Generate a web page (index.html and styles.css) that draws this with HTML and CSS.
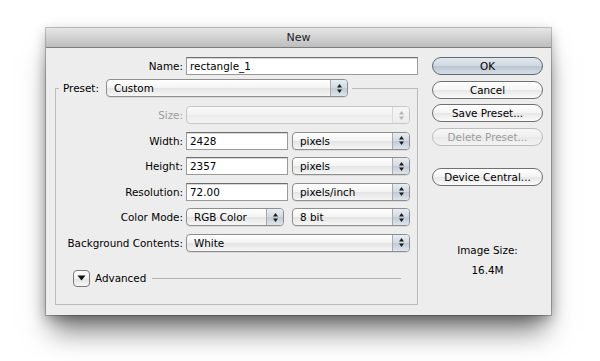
FILE: index.html
```html
<!DOCTYPE html>
<html lang="en">
  <head>
    <meta charset="UTF-8" />
    <title>New</title>
    <link rel="stylesheet" href="styles.css">
  </head>
  <body>
    <div class="dialog">
      <div class="titlebar">New</div>
      <div class="content">
        <!-- Left: form -->
        <div class="main">
          <div class="name-row">
            <span class="lbl">Name:</span>
            <div class="field">rectangle_1</div>
          </div>

          <fieldset class="group">
            <legend class="legend">
              <span class="lbl">Preset:</span>
              <div class="popup preset">
                <span class="popup-text">Custom</span>
                <span class="arrows"><svg width="7" height="11" viewBox="0 0 7 11"><path d="M3.5 1 L6 4.5 H1 Z M3.5 10 L6 6.5 H1 Z" /></svg></span>
              </div>
            </legend>

            <div class="form-grid">
              <span class="lbl disabled">Size:</span>
              <div class="popup disabled full">
                <span class="popup-text"></span>
                <span class="arrows"><svg width="7" height="11" viewBox="0 0 7 11"><path d="M3.5 1 L6 4.5 H1 Z M3.5 10 L6 6.5 H1 Z" /></svg></span>
              </div>

              <span class="lbl">Width:</span>
              <div class="pair">
                <div class="field small">2428</div>
                <div class="popup unit">
                  <span class="popup-text">pixels</span>
                  <span class="arrows"><svg width="7" height="11" viewBox="0 0 7 11"><path d="M3.5 1 L6 4.5 H1 Z M3.5 10 L6 6.5 H1 Z" /></svg></span>
                </div>
              </div>

              <span class="lbl">Height:</span>
              <div class="pair">
                <div class="field small">2357</div>
                <div class="popup unit">
                  <span class="popup-text">pixels</span>
                  <span class="arrows"><svg width="7" height="11" viewBox="0 0 7 11"><path d="M3.5 1 L6 4.5 H1 Z M3.5 10 L6 6.5 H1 Z" /></svg></span>
                </div>
              </div>

              <span class="lbl">Resolution:</span>
              <div class="pair">
                <div class="field small">72.00</div>
                <div class="popup unit">
                  <span class="popup-text">pixels/inch</span>
                  <span class="arrows"><svg width="7" height="11" viewBox="0 0 7 11"><path d="M3.5 1 L6 4.5 H1 Z M3.5 10 L6 6.5 H1 Z" /></svg></span>
                </div>
              </div>

              <span class="lbl">Color Mode:</span>
              <div class="pair mode">
                <div class="popup color">
                  <span class="popup-text">RGB Color</span>
                  <span class="arrows"><svg width="7" height="11" viewBox="0 0 7 11"><path d="M3.5 1 L6 4.5 H1 Z M3.5 10 L6 6.5 H1 Z" /></svg></span>
                </div>
                <div class="popup unit">
                  <span class="popup-text">8 bit</span>
                  <span class="arrows"><svg width="7" height="11" viewBox="0 0 7 11"><path d="M3.5 1 L6 4.5 H1 Z M3.5 10 L6 6.5 H1 Z" /></svg></span>
                </div>
              </div>

              <span class="lbl">Background Contents:</span>
              <div class="popup full">
                <span class="popup-text">White</span>
                <span class="arrows"><svg width="7" height="11" viewBox="0 0 7 11"><path d="M3.5 1 L6 4.5 H1 Z M3.5 10 L6 6.5 H1 Z" /></svg></span>
              </div>
            </div>

            <div class="advanced">
              <span class="disclosure"><svg width="9" height="6" viewBox="0 0 9 6"><path d="M0.5 0.5 H8.5 L4.5 5.5 Z" /></svg></span>
              <span class="adv-text">Advanced</span>
              <span class="adv-line"></span>
            </div>
          </fieldset>
        </div>

        <!-- Right: buttons -->
        <div class="side">
          <button class="btn default">OK</button>
          <button class="btn">Cancel</button>
          <button class="btn">Save Preset...</button>
          <button class="btn disabled">Delete Preset...</button>
          <button class="btn device">Device Central...</button>
          <div class="size-info">
            <div>Image Size:</div>
            <div class="size-value">16.4M</div>
          </div>
        </div>
      </div>
    </div>
  </body>
</html>
```

FILE: styles.css
```css
* {
  margin: 0;
  padding: 0;
  box-sizing: border-box;
}

body {
  background: #ffffff;
  font-family: "DejaVu Sans", "Lucida Grande", sans-serif;
  font-size: 10.4px;
  color: #000;
  padding: 28px 0 0 46px;
  min-height: 100vh;
}

.dialog {
  width: 505px;
  height: 287px;
  background: #ededed;
  box-shadow: 0 0 0 1px rgba(0, 0, 0, 0.22), 0 4px 12px rgba(0, 0, 0, 0.3),
    0 22px 26px -6px rgba(0, 0, 0, 0.5);
}

.titlebar {
  height: 20px;
  line-height: 19px;
  text-align: center;
  font-size: 11px;
  color: #222;
  background: linear-gradient(#e6e6e6, #bdbdbd);
  border-bottom: 1px solid #7d7d7d;
}

.content {
  display: flex;
  padding-top: 9px;
}

.main {
  padding-left: 9px;
  width: 372px;
}

.lbl {
  text-align: right;
  white-space: nowrap;
  line-height: 18px;
}

.lbl.disabled {
  color: #9b9b9b;
}

.name-row {
  display: grid;
  grid-template-columns: 128px 232px;
  column-gap: 3px;
  height: 18px;
}

.field {
  height: 18px;
  line-height: 16px;
  padding-left: 3px;
  background: #fff;
  border: 1px solid #9a9a9a;
  border-top-color: #6f6f6f;
  box-shadow: inset 0 1px 0 #d8d8d8;
}

.field.small {
  width: 102px;
}

/* Group box */
.group {
  width: 363px;
  margin-top: 4px;
  border: 1px solid #bcbcbc;
  padding: 9px 0 17px 0;
}

.legend {
  display: flex;
  margin-left: 3px;
  padding: 0 4px;
}

.legend .lbl {
  width: 38px;
  text-align: left;
  margin-right: 5px;
}

.popup {
  display: inline-flex;
  height: 18px;
  border: 1px solid #8e8e8e;
  border-radius: 4px;
  background: linear-gradient(#ffffff, #f3f3f3 50%, #e4e4e4 51%, #f6f6f6);
  box-shadow: 0 1px 0 rgba(0, 0, 0, 0.08);
}

.popup-text {
  flex: 1;
  line-height: 16px;
  padding-left: 7px;
  overflow: hidden;
  white-space: nowrap;
}

.arrows {
  width: 17px;
  display: flex;
  align-items: center;
  justify-content: center;
  border-left: 1px solid #a9a9a9;
  border-radius: 0 3px 3px 0;
  background: linear-gradient(#e8edf3, #d1d9e3 50%, #bfcad7 51%, #dfe5ec);
}

.arrows svg {
  fill: #1c1c1c;
}

.popup.preset {
  width: 242px;
}

.popup.full {
  width: 224px;
}

.popup.unit {
  width: 118px;
}

.popup.color {
  width: 98px;
}

.popup.disabled {
  border-color: #c6c6c6;
  background: linear-gradient(#fafafa, #f1f1f1 50%, #ebebeb 51%, #f4f4f4);
  box-shadow: none;
}

.popup.disabled .arrows {
  border-left-color: #dadada;
  background: linear-gradient(#f5f5f5, #ececec);
}

.popup.disabled .arrows svg {
  fill: #b4b4b4;
}

.form-grid {
  display: grid;
  grid-template-columns: 127px 224px;
  grid-auto-rows: 18px;
  column-gap: 3px;
  row-gap: 7.6px;
}

.pair {
  display: flex;
  gap: 4px;
}

.pair.mode {
  gap: 8px;
}

/* Advanced */
.advanced {
  display: flex;
  align-items: center;
  margin: 18px 16px 0 17px;
  height: 17px;
}

.disclosure {
  width: 17px;
  height: 17px;
  display: flex;
  align-items: center;
  justify-content: center;
  border: 1px solid #7a7a7a;
  border-radius: 4px;
  background: linear-gradient(#ffffff, #f0f0f0 50%, #e2e2e2 51%, #f7f7f7);
}

.disclosure svg {
  fill: #111;
}

.adv-text {
  margin-left: 5px;
}

.adv-line {
  flex: 1;
  height: 1px;
  margin-left: 6px;
  background: #b4b4b4;
}

/* Side buttons */
.side {
  width: 111px;
  margin-left: 14px;
  display: flex;
  flex-direction: column;
}

.btn {
  height: 18px;
  font-family: inherit;
  font-size: 10.4px;
  color: #000;
  border: 1px solid #707070;
  border-radius: 9px;
  background: linear-gradient(#ffffff, #f4f4f4 50%, #e6e6e6 51%, #fbfbfb);
  margin-bottom: 5.67px;
}

.btn.default {
  background: linear-gradient(#e4e9ef, #cfd7e1 50%, #bac5d2 51%, #d6dde6);
  border-color: #5f6874;
}

.btn.disabled {
  color: #9c9c9c;
  border-color: #bdbdbd;
  background: linear-gradient(#f7f7f7, #efefef 50%, #e9e9e9 51%, #f3f3f3);
}

.btn.device {
  margin-top: 16px;
}

.size-info {
  margin-top: 49px;
  text-align: center;
  line-height: 20px;
}
```
